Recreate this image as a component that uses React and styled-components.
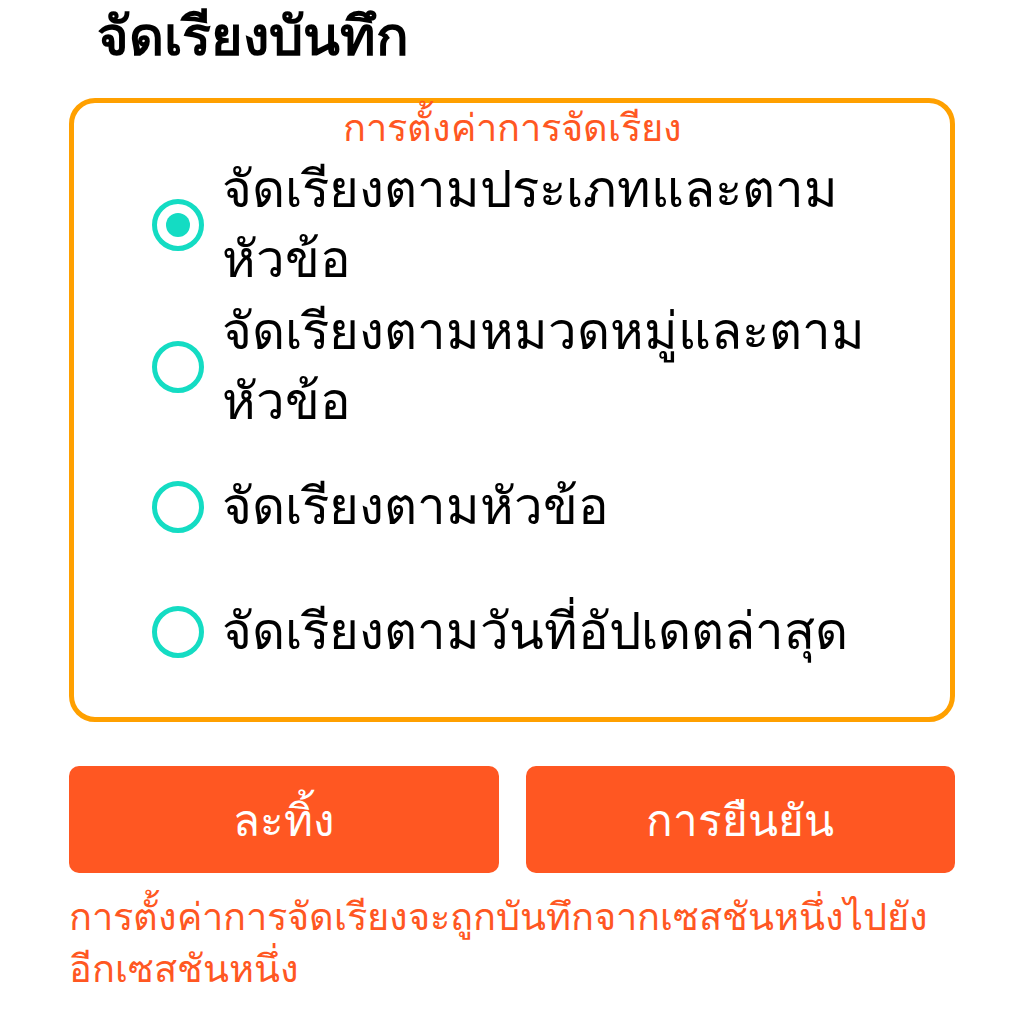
import { useState } from "react";
import styled, { createGlobalStyle } from "styled-components";

const GlobalStyle = createGlobalStyle`
  html, body {
    margin: 0;
    padding: 0;
    background: #ffffff;
  }
  body {
    font-family: Roboto, "DejaVu Sans", sans-serif;
  }
`;

const Page = styled.div`
  width: 1024px;
  padding: 0 69px;
  box-sizing: border-box;
`;

const Title = styled.h1`
  margin: 0;
  padding: 4px 0 0 28px;
  font-size: 54px;
  line-height: 66px;
  font-weight: 700;
  color: #000;
`;

const Box = styled.div`
  margin-top: 28px;
  border: 5px solid #ffa000;
  border-radius: 26px;
  padding: 5px 40px 50px 78px;
`;

const BoxTitle = styled.div`
  margin: 0 -40px 0 -78px;
  text-align: center;
  font-size: 38px;
  line-height: 40px;
  color: #ff5722;
`;

const Options = styled.div`
  display: flex;
  flex-direction: column;
`;

const Option = styled.label`
  display: flex;
  align-items: center;
  gap: 18px;
  margin-top: ${(p) => p.$space}px;
  cursor: pointer;
`;

const Radio = styled.span`
  flex: none;
  width: 52px;
  height: 52px;
  box-sizing: border-box;
  border: 5px solid #14dcc3;
  border-radius: 50%;
  display: flex;
  align-items: center;
  justify-content: center;

  &::after {
    content: "";
    width: 24px;
    height: 24px;
    border-radius: 50%;
    background: #14dcc3;
    display: ${(p) => (p.$checked ? "block" : "none")};
  }
`;

const OptionText = styled.span`
  font-size: 51px;
  line-height: 70px;
  color: #000;
`;

const Buttons = styled.div`
  display: grid;
  grid-template-columns: 1fr 1fr;
  gap: 27px;
  margin-top: 44px;
`;

const Button = styled.button`
  height: 107px;
  border: none;
  border-radius: 10px;
  background: #ff5722;
  color: #fff;
  font-family: inherit;
  font-size: 44px;
  cursor: pointer;
`;

const Note = styled.p`
  margin: 18px 0 0;
  font-size: 38px;
  line-height: 52px;
  color: #ff5722;
`;

const options = [
  { id: 1, text: "จัดเรียงตามประเภทและตามหัวข้อ", space: 7 },
  { id: 2, text: "จัดเรียงตามหมวดหมู่และตามหัวข้อ", space: 2 },
  { id: 3, text: "จัดเรียงตามหัวข้อ", space: 35 },
  { id: 4, text: "จัดเรียงตามวันที่อัปเดตล่าสุด", space: 55 },
];

export default function App() {
  const [selected, setSelected] = useState(1);

  return (
    <>
      <GlobalStyle />
      <Page>
        <Title>จัดเรียงบันทึก</Title>
        <Box>
          <BoxTitle>การตั้งค่าการจัดเรียง</BoxTitle>
          <Options>
            {options.map((opt) => (
              <Option
                key={opt.id}
                $space={opt.space}
                onClick={() => setSelected(opt.id)}
              >
                <Radio $checked={selected === opt.id} />
                <OptionText>{opt.text}</OptionText>
              </Option>
            ))}
          </Options>
        </Box>
        <Buttons>
          <Button>ละทิ้ง</Button>
          <Button>การยืนยัน</Button>
        </Buttons>
        <Note>
          การตั้งค่าการจัดเรียงจะถูกบันทึกจากเซสชันหนึ่งไปยังอีกเซสชันหนึ่ง
        </Note>
      </Page>
    </>
  );
}
